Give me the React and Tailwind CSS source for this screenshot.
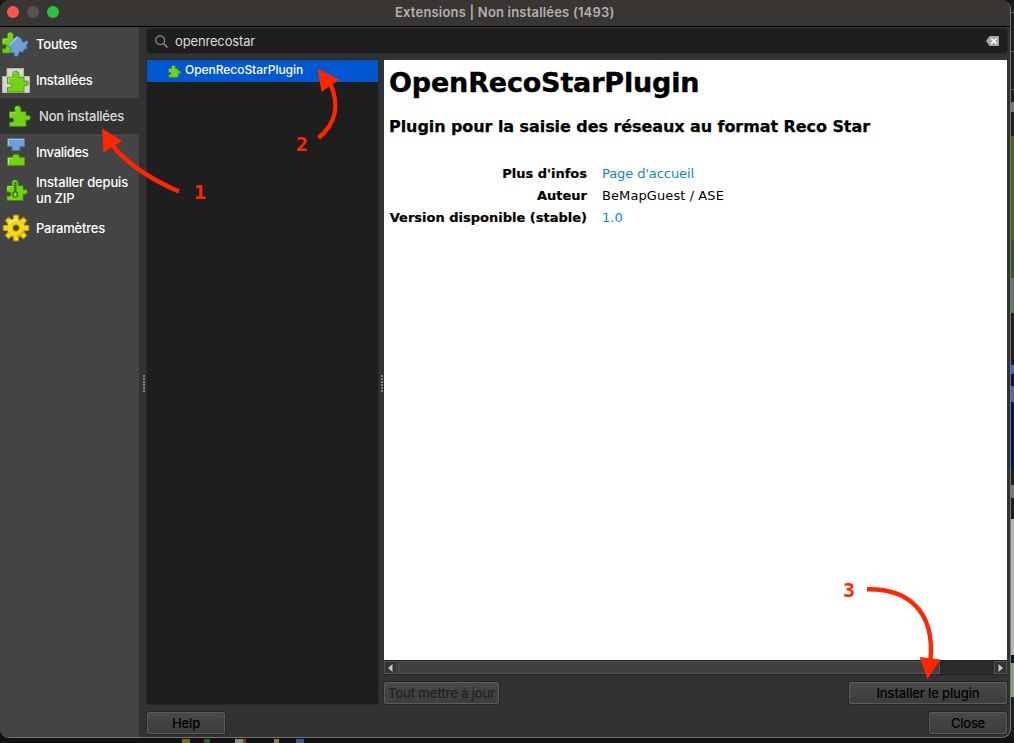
import { clsx } from "clsx";

const PIECE =
  "M1.5 6.800H6.500C7.200 6.200 6.600 5.200 6.600 4a3.200 3.200 0 0 1 6.400 0c0 1.200-.4 2.200.4 2.800H18v3.800c.6.300 1.100-.2 2-.2a2.200 2.200 0 0 1 0 4.800c-.9 0-1.400-.5-2-.2V21.500H1.500V17c.9 0 1.200.2 2.100.2a2 2 0 0 0 0-4.200c-.9 0-1.200.2-2.100.2z";

function Piece({ fill = "#73d216", stroke = "#3f8a08", shine = "#a4ec5a", width = "0.8" }) {
  return (
    <g>
      <path d={PIECE} fill={fill} stroke={stroke} strokeWidth={width} strokeLinejoin="round" />
      <path d="M2.400 12V7.700H7.600M7.600 4a2.200 2.200 0 0 1 2-2.200" fill="none" stroke={shine} strokeWidth="0.900" />
    </g>
  );
}

function AllIcon() {
  return (
    <svg width="32" height="32" viewBox="0 0 32 32" className="block">
      <g transform="translate(1 3.500) scale(.95 1)">
        <Piece />
      </g>
      <path
        d="M7.500 17.500 16.500 8.500Q18 7.800 19.500 9l2 2.200c.8.700.2 1.700.8 2.300.8.800 1.600.8 2.400.1l1.400-.8c1.200-.4 2.600 1 2 2.200l-1.400 2c-.6.800-.4 1.500.3 2.100L27 21l-3 .3c-.6.500-.3 1.500 0 2.500l-2.400.4-1.700-1.200-1.800 5L16 28.800l-1.800-1c-.7-1 .5-2-.2-2.800-.8-.8-1.800.4-2.800-.2-1.400-.7-1.600-2.200-.6-3l.8-.9c.2-.6-.1-.9-.6-1.300z"
        fill="#729fcf" stroke="#3465a4" strokeWidth=".9" strokeLinejoin="round"
      />
      <path d="M8.600 17.500 16.800 9.400" stroke="#c5dcf3" strokeWidth="1.200" />
    </svg>
  );
}

function InstalledIcon() {
  return (
    <svg width="32" height="32" viewBox="0 0 32 32" className="block">
      <path d="M2.500 12.500H7V4.500H23.500V12.500H29.500V28.500H2.500z" fill="#d3d7cf" stroke="#b4b8b0" />
      <g transform="translate(6 6.500)">
        <Piece />
      </g>
    </svg>
  );
}

function PluginIcon() {
  return (
    <svg width="23" height="23" viewBox="0 0 23 23" className="-ml-px block">
      <Piece />
    </svg>
  );
}

function InvalidIcon() {
  return (
    <svg width="32" height="32" viewBox="0 0 32 32" className="block">
      <path d="M7.500 2.500H24.500V10.500H19.800V14.500H12.200V10.500H7.500z" fill="#729fcf" stroke="#4a7ab5" />
      <path d="M8.500 9V3.500H23.500" fill="none" stroke="#9dc0e8" />
      <path d="M7.500 29.500V21.500H12.200C12.800 20.800 12.400 18.200 16 18.200S19.200 20.800 19.800 21.500H24.500V29.500z" fill="#73d216" stroke="#4e9a06" />
      <path d="M8.500 28V22.500H12.600" fill="none" stroke="#b4f070" />
    </svg>
  );
}

function ZipIcon() {
  return (
    <svg width="32" height="32" viewBox="0 0 32 32" className="block">
      <g transform="translate(5.500 5) scale(.98 1)">
        <Piece />
      </g>
      <path d="M15.200 8.500v9.500" stroke="#2e5a10" strokeWidth="3" strokeDasharray="1.200 1" />
      <path d="M15.200 8v10" stroke="#3a6a18" strokeWidth="1" />
      <rect x="13" y="18" width="4.400" height="5" rx="1.800" fill="#8ae234" stroke="#2e5a10" strokeWidth="1.200" />
    </svg>
  );
}

function GearIcon() {
  const teeth = [0, 45, 90, 135, 180, 225, 270, 315];
  return (
    <svg width="32" height="32" viewBox="0 0 32 32" className="block">
      {teeth.map((a) => (
        <path key={a} d="M13.200 8 13.800 3.200h4.400L18.800 8z" transform={`rotate(${a} 16 16)`} fill="#f5dc1e" stroke="#c4a000" strokeWidth="1" strokeLinejoin="round" />
      ))}
      <circle cx="16" cy="16" r="8.800" fill="#f5d918" />
      <path d="M9 12a8 8 0 0 1 8-4" fill="none" stroke="#fff38a" strokeWidth="1.600" />
      <path d="M23.500 18a8 8 0 0 1-7 6" fill="none" stroke="#d9b400" strokeWidth="1.600" />
      <circle cx="16" cy="16" r="3.200" fill="#444" stroke="#b99700" strokeWidth="1" />
    </svg>
  );
}

const NAV = [
  { label: "Toutes", Icon: AllIcon, height: "h-[35px] pb-px", spacing: "tracking-[-0.18px]" },
  { label: "Installées", Icon: InstalledIcon, height: "h-9", spacing: "tracking-[-0.25px]" },
  { label: "Non installées", Icon: PluginIcon, height: "h-9", spacing: "tracking-[-0.2px]", active: true },
  { label: "Invalides", Icon: InvalidIcon, height: "h-9", spacing: "tracking-[-0.29px]" },
  { label: "Installer depuis un ZIP", Icon: ZipIcon, height: "h-10", spacing: "tracking-[-0.17px]" },
  { label: "Paramètres", Icon: GearIcon, height: "h-9", spacing: "tracking-[-0.2px]" },
];

function Sidebar() {
  return (
    <nav className="flex w-[139px] shrink-0 flex-col bg-[#444444] text-[13px] font-medium leading-4 text-white">
      {NAV.map(({ label, Icon, height, spacing, active }) => (
        <div
          key={label}
          className={clsx("flex items-center", height, active ? "gap-2 bg-[#323232] pl-[9px] text-[#dddddd]" : "gap-1", spacing)}
        >
          <Icon />
          <span className="w-[98px]">{label}</span>
        </div>
      ))}
    </nav>
  );
}

function Grip() {
  return (
    <div className="flex flex-col gap-px">
      {[0, 1, 2, 3, 4, 5].map((i) => (
        <div key={i} className="h-[2px] w-[2px] bg-[#808080]" />
      ))}
    </div>
  );
}

function Button({ children, className }) {
  return (
    <button className={clsx("flex h-6 items-center justify-center rounded-[3px] border border-[#262626] text-[13px] font-medium", className)}>
      <span className="flex h-full w-full items-center justify-center rounded-[2px] border border-[#5c5c5c] bg-gradient-to-b from-[#484848] to-[#3d3d3d] pt-[2px]">
        {children}
      </span>
    </button>
  );
}

function Details() {
  return (
    <article className="flex h-[600px] shrink-0 flex-col bg-white pl-[5px] font-['DejaVu_Sans',sans-serif] text-black">
      <h1 className="mt-[7px] h-8 whitespace-nowrap text-[27px] font-bold leading-8 tracking-[-0.17px] [-webkit-text-stroke:0.4px_black]">
        OpenRecoStarPlugin
      </h1>
      <h2 className="mt-[18px] h-5 whitespace-nowrap text-[16px] font-bold leading-5 tracking-[-0.073px] [-webkit-text-stroke:0.25px_black]">
        Plugin pour la saisie des réseaux au format Reco Star
      </h2>
      <dl className="mt-[26px] grid grid-cols-[198px_auto] gap-x-[15px] text-[13px] leading-[22px]">
        <dt className="text-right font-bold [-webkit-text-stroke:0.2px_black]">Plus d'infos</dt>
        <dd className="tracking-[-0.08px] text-[#0d88cc]">Page d'accueil</dd>
        <dt className="text-right font-bold [-webkit-text-stroke:0.2px_black]">Auteur</dt>
        <dd className="tracking-[0.09px]">BeMapGuest / ASE</dd>
        <dt className="whitespace-nowrap text-right font-bold [-webkit-text-stroke:0.2px_black]">Version disponible (stable)</dt>
        <dd className="text-[#0d88cc]">1.0</dd>
      </dl>
    </article>
  );
}

function ScrollBar() {
  return (
    <div className="flex h-[15px] shrink-0 border-y border-[#222222] bg-[#2b2b2b]">
      <div className="flex w-[13px] items-center justify-center border border-[#555555] bg-[#333333]">
        <svg width="5" height="8" viewBox="0 0 5 8"><path d="M4.500 0v8L0 4z" fill="#c8c8c8" /></svg>
      </div>
      <div className="ml-px w-[542px] border border-[#555555] bg-[#404040]" />
      <div className="flex-1" />
      <div className="flex w-[13px] items-center justify-center border border-[#555555] bg-[#333333]">
        <svg width="5" height="8" viewBox="0 0 5 8"><path d="M.5 0v8L5 4z" fill="#c8c8c8" /></svg>
      </div>
    </div>
  );
}

function Backdrop() {
  return (
    <div className="flex w-[3px] shrink-0 flex-col bg-[#1c1c1c]">
      <div className="h-3" />
      <div className="h-px bg-[#666666]" />
      <div className="h-[38px]" />
      <div className="h-px bg-[#555555]" />
      <div className="h-[37px]" />
      <div className="h-px bg-[#555555]" />
      <div className="h-3" />
      <div className="h-[10px] bg-[#777777]" />
      <div className="h-[24px]" />
      <div className="h-[104px] bg-[#4d6414]" />
      <div className="h-[38px] bg-[#2d5a24]" />
      <div className="h-[35px] bg-[#5f7d5c]" />
      <div className="h-[48px]" />
      <div className="h-[4px] bg-[#001e6c]" />
      <div className="h-[9px] bg-[#4966ac]" />
      <div className="h-[12px] bg-[#00144f]" />
      <div className="h-[16px] bg-[#5069a8]" />
      <div className="h-[67px] bg-[#00155a]" />
      <div className="h-[16px]" />
      <div className="h-[13px] bg-[#777777]" />
      <div className="h-[21px]" />
      <div className="h-[136px] bg-[#b5b5b5]" />
      <div className="h-[8px] bg-[#111111]" />
      <div className="h-[34px] bg-[#8c9c86]" />
    </div>
  );
}

function Annotations() {
  return (
    <div className="pointer-events-none absolute inset-0 font-['DejaVu_Sans_Mono',monospace] text-[20px] font-bold leading-6 text-[#ff2600]">
      <svg width="1014" height="743" viewBox="0 0 1014 743" className="absolute inset-0" fill="none" stroke="#ff2600" strokeWidth="4.400">
        <path d="M179 191.500Q134 172 113 146" />
        <path d="M102 128.500 122 141 103.500 152.500z" fill="#ff2600" stroke="none" />
        <path d="M318.500 138C336 123 340 106 330.500 84" />
        <path d="M317.500 68.500 339 79.500 321.500 92z" fill="#ff2600" stroke="none" />
        <path d="M867 589.300C908 588.500 935 611 930.500 660" />
        <path d="M919.500 657 940.500 659.500 927.500 679z" fill="#ff2600" stroke="none" />
      </svg>
      <span className="absolute left-[194px] top-[180px]">1</span>
      <span className="absolute left-[296px] top-[132px]">2</span>
      <span className="absolute left-[843px] top-[578px]">3</span>
    </div>
  );
}

export default function App() {
  return (
    <div className="relative flex h-[743px] w-[1014px] flex-col overflow-hidden bg-[#121212] font-['Inter',sans-serif]">
      <div className="flex h-[738px]">
        <div className="flex w-[1011px] shrink-0 flex-col overflow-hidden rounded-[9px] border-b border-r border-[#777777] bg-[#323232]">
          <header className="flex h-[27px] shrink-0 items-center border-b border-black bg-[#383533] pb-[2px] pl-[7px]">
            <div className="flex gap-2">
              <div className="h-3 w-3 rounded-full bg-[#ff544d]" />
              <div className="h-3 w-3 rounded-full bg-[#565350]" />
              <div className="h-3 w-3 rounded-full bg-[#28c33c]" />
            </div>
            <h1 className="ml-[336px] whitespace-nowrap pt-px text-[13px] font-semibold tracking-[0.19px] text-[#b3b1b0]">
              Extensions | Non installées (1493)
            </h1>
          </header>
          <div className="flex flex-1">
            <Sidebar />
            <div className="flex w-2 items-center justify-center pl-[2px] pt-[3px]">
              <Grip />
            </div>
            <main className="flex w-[860px] flex-col">
              <div className="mt-[2px] flex h-6 items-center rounded-[3px] bg-[#1e1e1e] pl-2 pr-[8px] shadow-[0_0_0_1px_#2a2a2a]">
                <svg width="13" height="13" viewBox="0 0 13 13" fill="none" stroke="#909090" strokeWidth="1.200">
                  <circle cx="5.200" cy="5.200" r="4.400" />
                  <path d="m8.500 8.500 4 4" strokeWidth="1.500" />
                </svg>
                <span className="ml-[7px] flex-1 pt-[2px] text-[13px] tracking-[-0.15px] text-[#dddddd]">openrecostar</span>
                <svg width="13" height="10" viewBox="0 0 13 10">
                  <path d="M0 5 3.500 0H13V10H3.500z" fill="#a6a6a6" />
                  <path d="m5.200 2.300 5.400 5.400m0-5.400L5.200 7.700" stroke="#fff" strokeWidth="1.500" />
                </svg>
              </div>
              <div className="mt-[7px] flex h-[644px]">
                <div className="w-[231px] bg-[#1e1e1e] shadow-[0_0_0_1px_#292929]">
                  <div className="flex h-[22px] items-center bg-[#0058d0] pl-[21px] text-[12px] font-medium tracking-[-0.04px] text-white">
                    <svg width="13" height="13" viewBox="0 0 23 23" className="mt-px">
                      <Piece stroke="#4e9a06" />
                    </svg>
                    <span className="-mt-[2px] ml-1">OpenRecoStarPlugin</span>
                  </div>
                </div>
                <div className="flex w-[6px] items-center justify-center pl-[2px] pt-[3px]">
                  <Grip />
                </div>
                <section className="flex w-[623px] flex-col">
                  <Details />
                  <ScrollBar />
                  <div className="-mx-px mt-[6px] flex shrink-0 justify-between">
                    <Button className="w-[117px] tracking-[-0.13px] text-[#222222]">Tout mettre à jour</Button>
                    <Button className="w-[160px] tracking-[-0.13px] text-black">Installer le plugin</Button>
                  </div>
                </section>
              </div>
              <div className="-mx-px mt-[7px] flex justify-between">
                <Button className="w-20 tracking-[-0.15px] text-black">Help</Button>
                <Button className="w-20 tracking-[-0.26px] text-black">Close</Button>
              </div>
            </main>
          </div>
        </div>
        <Backdrop />
      </div>
      <div className="flex h-[5px] items-end">
        <div className="ml-[182px] h-[4px] w-[8px] bg-[#7d6f10]" />
        <div className="ml-[14px] h-[4px] w-[6px] bg-[#2e5a35]" />
        <div className="ml-[25px] h-[4px] w-[8px] bg-[#8a8a8a]" />
        <div className="h-[4px] w-[3px] bg-[#7a3d28]" />
        <div className="ml-[28px] h-[4px] w-[5px] bg-[#8c7c46]" />
        <div className="ml-[17px] h-[4px] w-[8px] bg-[#365f8c]" />
      </div>
      <Annotations />
    </div>
  );
}
